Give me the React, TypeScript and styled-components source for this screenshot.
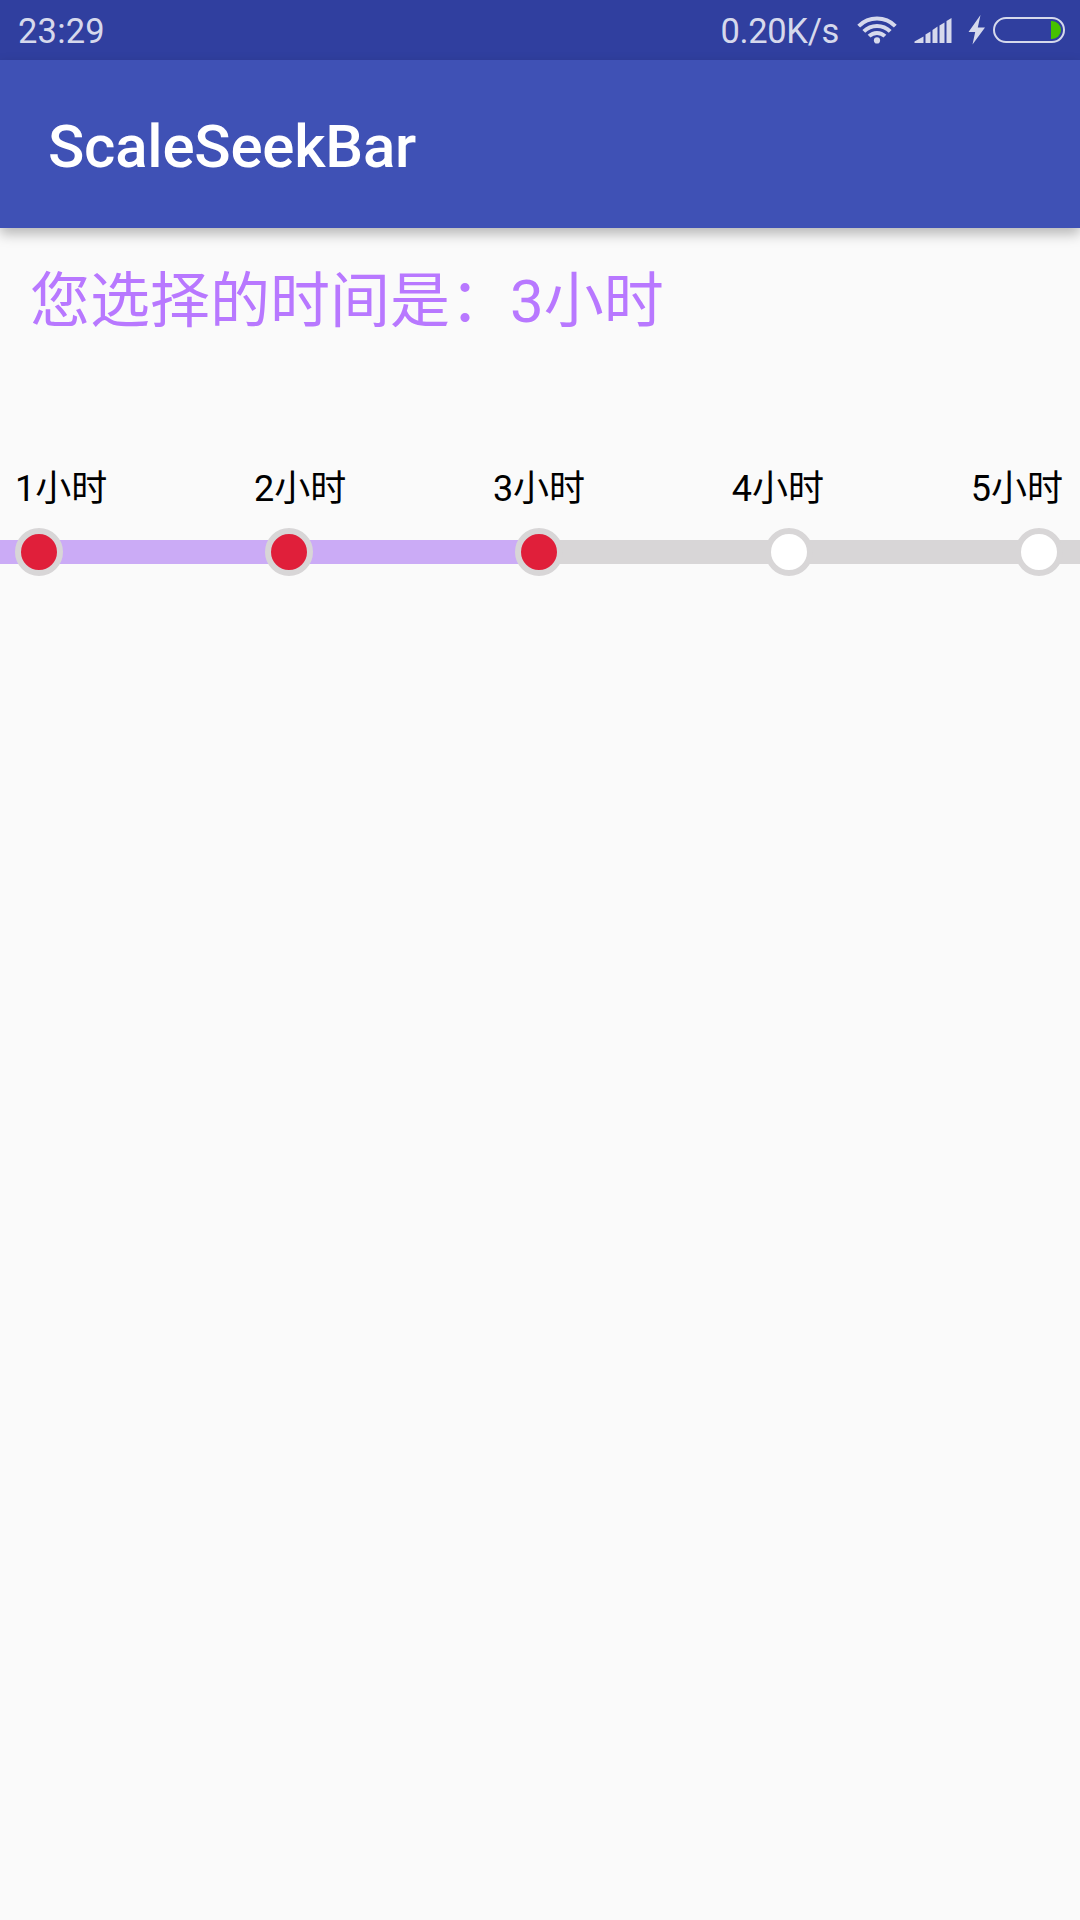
import React from "react";
import styled, { createGlobalStyle } from "styled-components";

const GlobalStyle = createGlobalStyle`
  html, body { margin: 0; padding: 0; background: #fafafa; }
  * { box-sizing: border-box; }
`;

const Screen = styled.div`
  width: 1080px;
  height: 1920px;
  display: flex;
  flex-direction: column;
  overflow: hidden;
  background: #fafafa;
  font-family: Roboto, "Noto Sans CJK SC", sans-serif;
`;

const StatusBar = styled.header`
  flex: none;
  height: 60px;
  padding: 0 15px 0 18px;
  display: flex;
  align-items: center;
  background: #303f9f;
  color: #d6d9ec;
`;

const StatusText = styled.span<{ $spacing?: number }>`
  font-size: 34.5px;
  line-height: 60px;
  padding-top: 2px;
  letter-spacing: ${(p) => p.$spacing ?? 0}px;
  white-space: nowrap;
`;

const StatusIcons = styled.div`
  margin-left: auto;
  display: flex;
  align-items: center;
`;

const Glyph = styled.svg<{ $gap: number }>`
  display: block;
  flex: none;
  margin-left: ${(p) => p.$gap}px;
`;

const AppBar = styled.div`
  flex: none;
  height: 168px;
  padding: 5px 48px 0;
  display: flex;
  align-items: center;
  background: #3f51b5;
  box-shadow: 0 6px 12px rgba(0, 0, 0, 0.27);
`;

const Title = styled.h1`
  margin: 0;
  font-size: 60px;
  font-weight: 500;
  line-height: 70px;
  letter-spacing: -0.22px;
  color: #fff;
`;

const Content = styled.main`
  display: flex;
  flex-direction: column;
`;

const Selection = styled.p`
  margin: 0;
  padding: 32px 30px 0;
  font-size: 60px;
  line-height: 84px;
  color: #b878ff;
`;

const SeekBar = styled.section`
  margin-top: 119px;
  display: flex;
  flex-direction: column;
`;

const Labels = styled.div`
  display: flex;
  justify-content: space-between;
  padding: 0 17px 0 15px;
`;

const Label = styled.span`
  font-size: 36px;
  line-height: 52px;
  color: #000;
`;

const Track = styled.div<{ $percent: number }>`
  height: 24px;
  margin-top: 25px;
  padding: 0 17px 0 15px;
  display: flex;
  align-items: center;
  justify-content: space-between;
  background: linear-gradient(
    to right,
    #cbabf6 ${(p) => p.$percent}%,
    #d8d6d7 ${(p) => p.$percent}%
  );
`;

const Stop = styled.button<{ $active: boolean }>`
  flex: none;
  width: 48px;
  height: 48px;
  padding: 0;
  border: 6px solid #d8d6d7;
  border-radius: 50%;
  background: ${(p) => (p.$active ? "#e01f3a" : "#fff")};
`;

const HOURS = [1, 2, 3, 4, 5];
const SELECTED = 3;

function Wifi() {
  return (
    <Glyph $gap={18} width="40" height="28" viewBox="0 0 40 28" fill="none" stroke="#d6d9ec" strokeWidth="4">
      <path d="M1.7 10.2A25.8 25.8 0 0 1 38.3 10.2" />
      <path d="M6.8 15.4A18.6 18.6 0 0 1 33.2 15.4" />
      <path d="M12.1 20.1A11.3 11.3 0 0 1 27.9 20.1" />
      <circle cx="20" cy="24.4" r="3.1" fill="#d6d9ec" stroke="none" />
    </Glyph>
  );
}

function Signal() {
  return (
    <Glyph $gap={17} width="38" height="26" viewBox="0 0 38 26" fill="#d6d9ec">
      <path d="M0.5 26V24.5L9.5 19.5V26Z" />
      <path d="M11.5 26V17.5L16.5 14.5V26Z" />
      <path d="M18.5 26V13L23.5 9.5V26Z" />
      <path d="M25.5 26V8.5L30.5 5.5V26Z" />
      <path d="M32.5 26V4L37.5 1V26Z" />
    </Glyph>
  );
}

function Bolt() {
  return (
    <Glyph $gap={16} width="18" height="30" viewBox="0 0 18 30" fill="#d6d9ec">
      <path d="M12.5 0L0.5 17H7.2L4.5 29.5L17 12.5H9.8Z" />
    </Glyph>
  );
}

function Battery() {
  return (
    <Glyph $gap={7} width="72" height="26" viewBox="0 0 72 26">
      <rect x="1" y="1" width="70" height="24" rx="12" fill="none" stroke="#d6d9ec" strokeWidth="2" />
      <path d="M58 4H59A9 9 0 0 1 59 22H58Z" fill="#46c100" />
    </Glyph>
  );
}

export default function App() {
  return (
    <Screen>
      <GlobalStyle />
      <StatusBar>
        <StatusText $spacing={0.2}>23:29</StatusText>
        <StatusIcons>
          <StatusText $spacing={-0.35}>0.20K/s</StatusText>
          <Wifi />
          <Signal />
          <Bolt />
          <Battery />
        </StatusIcons>
      </StatusBar>
      <AppBar>
        <Title>ScaleSeekBar</Title>
      </AppBar>
      <Content>
        <Selection>您选择的时间是：{SELECTED}小时</Selection>
        <SeekBar>
          <Labels>
            {HOURS.map((h) => (
              <Label key={h}>{h}小时</Label>
            ))}
          </Labels>
          <Track $percent={50}>
            {HOURS.map((h) => (
              <Stop key={h} $active={h <= SELECTED} aria-label={`${h}小时`} />
            ))}
          </Track>
        </SeekBar>
      </Content>
    </Screen>
  );
}
